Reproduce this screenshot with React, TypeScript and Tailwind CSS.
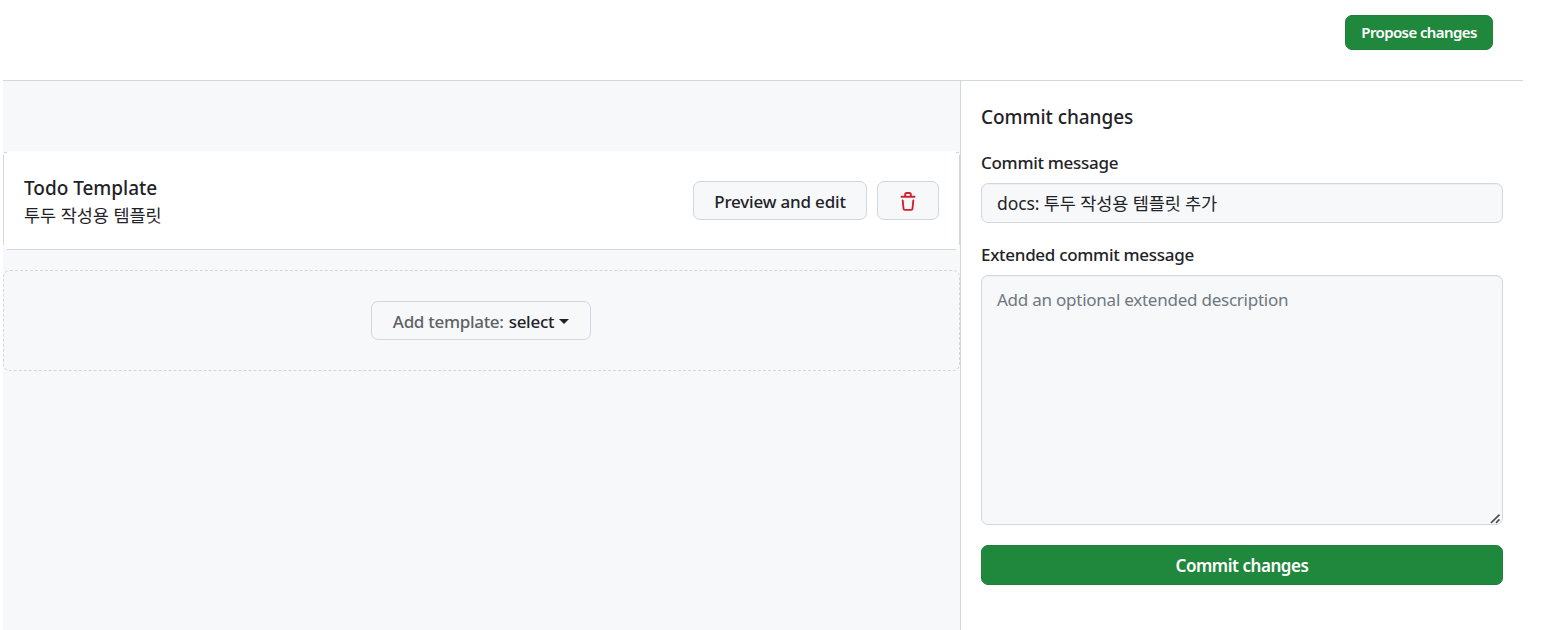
import React from 'react';

function TrashIcon() {
  return (
    <svg viewBox="0 0 16 16" width="20" height="20" fill="#cf222e" aria-hidden="true" className="mt-[2px]">
      <path d="M11 1.75V3h2.25a.75.75 0 0 1 0 1.5H2.75a.75.75 0 0 1 0-1.5H5V1.75C5 .784 5.784 0 6.75 0h2.5C10.216 0 11 .784 11 1.75ZM4.496 6.675l.66 6.6a.25.25 0 0 0 .249.225h5.19a.25.25 0 0 0 .249-.225l.66-6.6a.75.75 0 0 1 1.492.149l-.66 6.6A1.748 1.748 0 0 1 10.595 15h-5.19a1.75 1.75 0 0 1-1.741-1.575l-.66-6.6a.75.75 0 1 1 1.492-.15ZM6.5 1.75V3h3V1.75a.25.25 0 0 0-.25-.25h-2.5a.25.25 0 0 0-.25.25Z" />
    </svg>
  );
}

function Header() {
  return (
    <header className="flex h-[81px] items-start justify-end border-b border-[#d0d7de] pt-[15px] pr-[30px]">
      <button className="flex h-[35px] w-[148px] items-center justify-center rounded-[7px] border border-[#1f7f3b] bg-[#1f883d] text-[15px] font-semibold tracking-[-0.6px] whitespace-nowrap text-white">
        Propose changes
      </button>
    </header>
  );
}

function CardEdges() {
  return (
    <div className="pointer-events-none absolute inset-0">
      <span className="absolute top-[4px] bottom-[5px] left-0 w-px bg-[#d0d7de]" />
      <span className="absolute top-[4px] right-0 bottom-[5px] w-px bg-[#d0d7de]" />
      <span className="absolute right-[4px] bottom-0 left-[4px] h-px bg-[#d0d7de]" />
      <span className="absolute top-px left-px h-px w-[3px] bg-[#d0d7de]" />
      <span className="absolute top-px right-px h-px w-[3px] bg-[#d0d7de]" />
    </div>
  );
}

function TemplateCard() {
  return (
    <section className="relative mt-[70px] flex h-[99px] items-start justify-between rounded-[7px] bg-white px-[21px]">
      <CardEdges />
      <div className="pt-[23px]">
        <h3 className="text-[19px] leading-[28px] font-medium tracking-[-0.03px]">Todo Template</h3>
        <p className="text-[17.5px] leading-[26px] tracking-[-0.02px]">투두 작성용 템플릿</p>
      </div>
      <div className="flex gap-[10px] pt-[30px]">
        <button className="flex h-[39px] w-[174px] items-center justify-center rounded-[7px] border border-[#d0d7de] bg-[#f6f8fa] pt-[2px] text-[17px] font-medium tracking-[-0.18px] whitespace-nowrap">
          Preview and edit
        </button>
        <button
          aria-label="Delete template"
          className="flex h-[39px] w-[62px] items-center justify-center rounded-[7px] border border-[#d0d7de] bg-[#f6f8fa]"
        >
          <TrashIcon />
        </button>
      </div>
    </section>
  );
}

function AddTemplate() {
  return (
    <section className="mt-5 flex h-[101px] items-center justify-center rounded-[7px] border border-dashed border-[#d0d7de] pr-px">
      <button className="flex h-[39px] w-[220px] items-center justify-center rounded-[7px] border border-[#d0d7de] bg-[#f6f8fa] pt-[2px] text-[17px] font-medium whitespace-nowrap">
        <span className="tracking-[-0.3px] text-[#5f6265]">Add template:</span>
        <span className="ml-[5px] tracking-[-0.28px]">select</span>
        <span className="ml-[5px] border-x-[5px] border-t-[5px] border-x-transparent border-t-[#1f2328]" />
      </button>
    </section>
  );
}

function ResizeGrip() {
  return (
    <svg
      viewBox="0 0 12 12"
      width="12"
      height="12"
      className="pointer-events-none absolute right-px bottom-0"
      stroke="#4d5054"
      strokeWidth="1.7"
      aria-hidden="true"
    >
      <path d="M1 9.8 9.5 1.6M6 9.8 9.5 6.4" />
    </svg>
  );
}

function CommitPanel() {
  return (
    <aside className="w-[563px] shrink-0 border-l border-[#d0d7de] pt-[22px] pr-5 pl-5">
      <h2 className="text-[19px] leading-[28px] font-medium tracking-[-0.05px]">Commit changes</h2>
      <label htmlFor="message" className="mt-[19px] block text-[17px] leading-[26px] font-medium tracking-[-0.3px]">
        Commit message
      </label>
      <input
        id="message"
        defaultValue="docs: 투두 작성용 템플릿 추가"
        className="mt-[7px] block h-[40px] w-full rounded-[7px] border border-[#d0d7de] bg-[#f6f8fa] px-[15px] pb-[2px] text-[17.5px] tracking-[-0.1px] shadow-[inset_0_1px_0_rgba(208,215,222,0.2)]"
      />
      <label htmlFor="description" className="mt-[19px] block text-[17px] leading-[26px] font-medium tracking-[-0.3px]">
        Extended commit message
      </label>
      <div className="relative mt-[7px]">
        <textarea
          id="description"
          placeholder="Add an optional extended description"
          className="block h-[250px] w-full resize-none rounded-[7px] border border-[#d0d7de] bg-[#f6f8fa] px-[15px] py-[10px] text-[17px] leading-[27px] tracking-[-0.24px] shadow-[inset_0_1px_0_rgba(208,215,222,0.2)] placeholder:text-[#6e7781]"
        />
        <ResizeGrip />
      </div>
      <button className="mt-5 flex h-[40px] w-full items-center justify-center rounded-[7px] border border-[#1f7f3b] bg-[#1f883d] pt-px text-[17px] font-semibold tracking-[-0.45px] text-white">
        Commit changes
      </button>
    </aside>
  );
}

export default function App() {
  return (
    <div className="h-[630px] w-[1541px] overflow-hidden bg-white pr-[18px] pl-[3px] font-['Noto_Sans','Noto_Sans_CJK_KR',sans-serif] text-[#1f2328]">
      <Header />
      <div className="flex h-[549px]">
        <main className="min-w-0 flex-1 bg-[#f6f8fa]">
          <TemplateCard />
          <AddTemplate />
        </main>
        <CommitPanel />
      </div>
    </div>
  );
}
